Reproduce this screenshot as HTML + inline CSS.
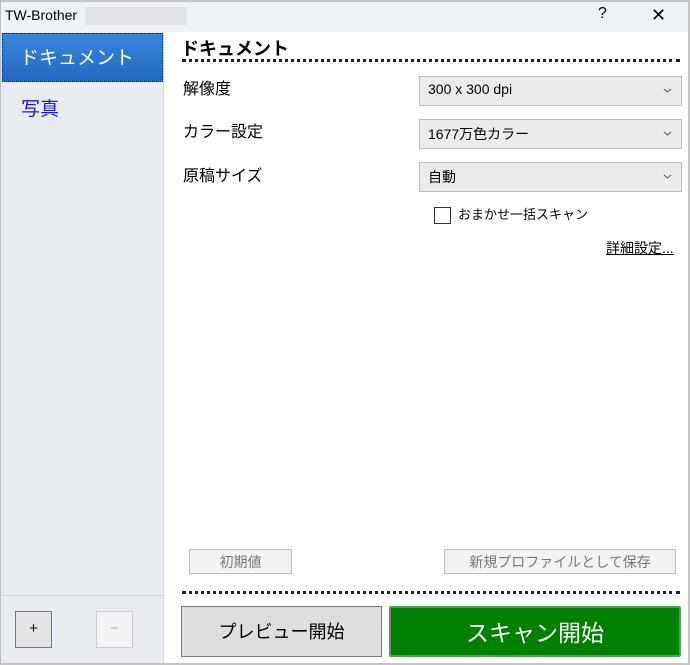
<!DOCTYPE html>
<html><head><meta charset="utf-8"><style>
*{box-sizing:border-box;margin:0;padding:0}
body{width:690px;height:665px;overflow:hidden;background:#fff;font-family:"Liberation Sans","Noto Sans CJK JP",sans-serif;color:#000}
.win{position:absolute;left:0;top:0;width:690px;height:665px;border:1px solid #bfbfbf;border-top:2px solid #c4c4c4;border-right:2px solid #c4c4c4;border-bottom:2px solid #c4c4c4;background:#fff}
.title{position:absolute;left:0;top:0;width:100%;height:30px;background:#eef3f8}
.title .t{position:absolute;left:4px;top:5px;font-size:14px}
.blur{position:absolute;left:84px;top:5px;width:102px;height:18px;background:#e4e4e8}
.q{position:absolute;left:597px;top:3px;font-size:16px}
.x{position:absolute;left:650px;top:3px;font-size:18px}
.side{position:absolute;left:0;top:30px;width:163px;height:631px;background:#e8ebef;border-right:1px solid #d6d8da}
.sel{position:absolute;left:1px;top:1px;width:161px;height:49px;background:linear-gradient(#3a86dc,#2368c4);border:1px dotted #102040;color:#fff;font-size:19px;padding:9px 0 0 17px}
.photo{position:absolute;left:20px;top:62px;color:#1a1ad8;font-size:19px}
.sline{position:absolute;left:0;top:563px;width:163px;border-top:1px solid #d6d8da}
.btn{position:absolute;border:1px solid #999;background:#e1e1e1;text-align:center}
.h{position:absolute;left:180px;top:33px;font-size:18px;font-weight:bold}
.dots{position:absolute;left:181px;height:0;border-top:3px dotted #222;width:498px}
.lbl{position:absolute;left:182px;font-size:16px}
.sel2{position:absolute;left:418px;width:263px;height:30px;border:1px solid #bdbdbd;background:#ebebeb;font-size:14px;padding:4px 0 0 8px}
.sel2 svg{position:absolute;right:9px;top:11px}
.dis{position:absolute;height:25px;border:1px solid #bcbcbc;background:#f3f3f3;color:#777;font-size:14px;text-align:center;padding-top:2px}
</style></head><body><div class="win">
<div class="title"><span class="t">TW-Brother</span><div class="blur"></div><span class="q">?</span><span class="x">✕</span></div>
<div class="side"><div class="sel">ドキュメント</div><div class="photo">写真</div><div class="sline"></div>
<div class="btn" style="left:14px;top:579px;width:37px;height:37px;font-size:15px;padding-top:8px;border-color:#777;background:#e4e4e4">+</div>
<div class="btn" style="left:95px;top:579px;width:37px;height:37px;font-size:15px;padding-top:8px;border-color:#ccc;background:#f3f3f3;color:#aaa">−</div>
</div>
<div class="h">ドキュメント</div>
<div class="dots" style="top:57px"></div>
<div class="lbl" style="top:73px">解像度</div>
<div class="lbl" style="top:116px">カラー設定</div>
<div class="lbl" style="top:160px">原稿サイズ</div>
<div class="sel2" style="top:74px">300 x 300 dpi<svg width="9" height="5"><path d="M1 1L4.5 4L8 1" stroke="#555" fill="none"/></svg></div>
<div class="sel2" style="top:117px">1677万色カラー<svg width="9" height="5"><path d="M1 1L4.5 4L8 1" stroke="#555" fill="none"/></svg></div>
<div class="sel2" style="top:160px">自動<svg width="9" height="5"><path d="M1 1L4.5 4L8 1" stroke="#555" fill="none"/></svg></div>
<div style="position:absolute;left:433px;top:205px;width:17px;height:17px;border:1px solid #333;background:#fff"></div>
<div style="position:absolute;left:457px;top:202px;font-size:13px">おまかせ一括スキャン</div>
<div style="position:absolute;left:605px;top:236px;font-size:14px;text-decoration:underline">詳細設定...</div>
<div class="dis" style="left:188px;top:547px;width:103px">初期値</div>
<div class="dis" style="left:443px;top:547px;width:232px">新規プロファイルとして保存</div>
<div class="dots" style="top:589px"></div>
<div class="btn" style="left:180px;top:604px;width:201px;height:51px;font-size:18px;padding-top:11px;border-color:#777;background:#dedede">プレビュー開始</div>
<div class="btn" style="left:388px;top:604px;width:292px;height:51px;font-size:23px;padding-top:6px;border:2px solid #5a9a5a;background:#008000;color:#fff;border-radius:2px">スキャン開始</div>
</div></body></html>
